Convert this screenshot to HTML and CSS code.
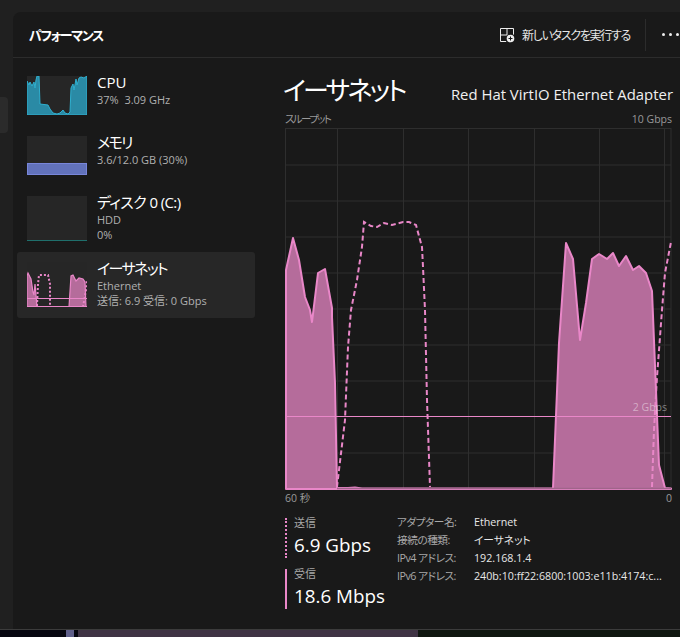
FILE: index.html
```html
<!DOCTYPE html>
<html lang="ja">
<head>
<meta charset="utf-8">
<title>パフォーマンス</title>
<link rel="stylesheet" href="styles.css">
</head>
<body>
<div class="app">
  <div class="window">
    <nav class="rail"><div class="rail-pill"></div></nav>
    <main class="panel">
      <header class="topbar">
        <h1 class="page-title">パフォーマンス</h1>
        <div class="actions">
          <svg class="task-icon" width="16" height="16" viewBox="0 0 16 16" aria-hidden="true">
            <path d="M1.5 1.5H14.5V9M7 14.5H1.5V1.5M1.5 8H14.5M8 1.5V14.5" fill="none" stroke="#eee" stroke-width="1"/>
            <circle cx="11.5" cy="11.5" r="5" fill="#191919"/>
            <circle cx="11.5" cy="11.5" r="3.8" fill="#eee"/>
            <path d="M11.5 9.5v4M9.5 11.5h4" stroke="#191919" stroke-width="1"/>
          </svg>
          <span class="task-label">新しいタスクを実行する</span>
          <span class="divider"></span>
          <span class="dots"><i></i><i></i><i></i></span>
        </div>
      </header>
      <div class="body">
        <aside class="sidebar">
          <div class="item item-cpu">
            <svg class="thumb thumb-short" viewBox="0 0 60 39" aria-hidden="true">
              <rect width="60" height="39" fill="#262626"/>
              <polygon points="0,39 0,5 2,9 3,6 5,10 7,6 8,12 9,4 10,0 12,0 13,28 21,29 23,33 26,37 30,38 33,37 36,34 38,37 41,38 43,36 44,12 46,8 47,14 49,3 50,9 52,2 54,1 57,2 60,0 60,39" fill="#2a8aa5" stroke="#2fb0d0" stroke-width="1"/>
            </svg>
            <div class="item-text">
              <div class="item-name">CPU</div>
              <div class="item-sub">37%&nbsp; 3.09 GHz</div>
            </div>
          </div>
          <div class="item item-mem">
            <svg class="thumb thumb-short" viewBox="0 0 60 39" aria-hidden="true">
              <rect width="60" height="39" fill="#262626"/>
              <rect x="0.5" y="27.5" width="59" height="11" fill="#6272bb" stroke="#7886da" stroke-width="1"/>
            </svg>
            <div class="item-text">
              <div class="item-name">メモリ</div>
              <div class="item-sub">3.6/12.0 GB (30%)</div>
            </div>
          </div>
          <div class="item item-disk">
            <svg class="thumb thumb-tall" viewBox="0 0 60 45" aria-hidden="true">
              <rect width="60" height="45" fill="#262626"/>
              <path d="M0 44.5H60" stroke="#1f6f6c" stroke-width="1"/>
            </svg>
            <div class="item-text">
              <div class="item-name">ディスク 0 (C:)</div>
              <div class="item-sub">HDD</div>
              <div class="item-sub">0%</div>
            </div>
          </div>
          <div class="item item-net">
            <svg class="thumb thumb-tall" viewBox="0 0 60 45" aria-hidden="true">
              <rect width="60" height="45" fill="#262626"/>
              <polygon points="0,45 0,14 1,11 4,17 6,30 7,33 8,22 10,45" fill="#b56c9b" stroke="#e987c8" stroke-width="1.2"/>
              <polygon points="42,45 44,14 46,13 49,19 52,16 56,17 58,20 59,45" fill="#b56c9b" stroke="#e987c8" stroke-width="1.2"/>
              <path d="M10 44L11 22L12 13L21 13L23 22L23 45M56 45L59 28L60 18" fill="none" stroke="#e987c8" stroke-width="2" stroke-dasharray="2 2"/>
              <path d="M0 36.5H60" stroke="#e987c8" stroke-width="1"/>
              <path d="M0 44.5H60" stroke="#e987c8" stroke-width="1"/>
            </svg>
            <div class="item-text">
              <div class="item-name">イーサネット</div>
              <div class="item-sub">Ethernet</div>
              <div class="item-sub">送信: 6.9 受信: 0 Gbps</div>
            </div>
          </div>
        </aside>
        <section class="content">
          <div class="heading-row">
            <h2 class="heading">イーサネット</h2>
            <span class="adapter">Red Hat VirtIO Ethernet Adapter</span>
          </div>
          <div class="axis-row axis-top"><span class="axis-title">スループット</span><span>10 Gbps</span></div>
          <svg class="chart" viewBox="285 128 387 362" aria-label="スループット グラフ">
            <g class="grid">
              <path d="M285 128.5H671M285 165H671M285 201H671M285 237H671M285 273H671M285 309H671M285 345H671M285 381H671M285 453H671"/>
              <path d="M285.5 128V489M337.5 128V489M403.5 128V489M468.5 128V489M534.5 128V489M599.5 128V489M664.5 128V489M671 128V489"/>
            </g>
            <polygon class="area" points="286,489 286,270 293,238 299,260 305,297 310,310 312,322 318,273 325,269 332,308 332,317 335,383 337,488 348,488 355,487.5 362,488.5 553,488.5 553,488 559,343 566,243 573,259 580,340 586,303 592,259 599,254 607,259 613,253 619,266 626,256 633,270 639,266 646,273 652,291 659,465 665,488 671,488.5 671,489"/>
            <path class="baseline" d="M337 488.5H671"/>
            <path class="dash" d="M337 487L339 470L345 420L348 347L351 310L357 280L362 247L364 222L371 226L377 227L384 223L392 225L403 222L409 222L416 225L422 247L423 267L425 310L427 400L430 487"/>
            <path class="dash" d="M652 487L654 430L657 377L662 310L665 273L671 242"/>
            <path class="limit" d="M285 416.5H671"/>
            <text class="limit-label" x="667" y="411" text-anchor="end">2 Gbps</text>
          </svg>
          <div class="axis-row axis-bottom"><span>60 秒</span><span>0</span></div>
          <div class="stats">
            <div class="rates">
              <div class="rate rate-send">
                <div class="rate-label">送信</div>
                <div class="rate-value">6.9 Gbps</div>
              </div>
              <div class="rate rate-recv">
                <div class="rate-label">受信</div>
                <div class="rate-value">18.6 Mbps</div>
              </div>
            </div>
            <dl class="details">
              <dt>アダプター名:</dt><dd>Ethernet</dd>
              <dt>接続の種類:</dt><dd>イーサネット</dd>
              <dt>IPv4 アドレス:</dt><dd>192.168.1.4</dd>
              <dt>IPv6 アドレス:</dt><dd>240b:10:ff22:6800:1003:e11b:4174:c...</dd>
            </dl>
          </div>
        </section>
      </div>
    </main>
  </div>
  <div class="desktop">
    <span class="d-black"></span><span class="d-blue"></span><span class="d-gap"></span><span class="d-mauve"></span><span class="d-green"></span>
  </div>
</div>
</body>
</html>
```
FILE: styles.css
```css
* { box-sizing: border-box; }
html, body { margin: 0; height: 100%; background: #202020; }
body {
  overflow: hidden;
  color: #fff;
  font-family: "Open Sans", "Noto Sans CJK JP", sans-serif;
  font-feature-settings: "palt";
}
.app { width: 680px; height: 637px; display: flex; flex-direction: column; }
.window { flex: none; height: 629px; display: flex; background: #202020; }
.rail { flex: none; width: 13px; padding-top: 97px; }
.rail-pill { width: 8px; height: 36px; background: #2b2b2b; border-radius: 0 4px 4px 0; }
.panel { flex: 1; margin-top: 12px; background: #191919; border-top-left-radius: 8px; display: flex; flex-direction: column; min-width: 0; }
.topbar { flex: none; height: 46px; border-bottom: 1px solid #2c2c2c; display: flex; align-items: center; justify-content: space-between; padding: 0 0 0 16px; }
.page-title { margin: 0; font-size: 13px; font-weight: 700; letter-spacing: -1.4px; }
.actions { display: flex; align-items: center; height: 32px; }
.task-icon { display: block; margin-right: 7px; }
.task-label { font-size: 12px; color: #e6e6e6; letter-spacing: -1.3px; }
.divider { width: 1px; height: 32px; background: #2c2c2c; margin: 0 16px 0 15px; }
.dots { display: flex; gap: 4px; width: 18px; }
.dots i { width: 3px; height: 3px; border-radius: 50%; background: #eee; flex: none; }
.body { flex: 1; display: flex; min-height: 0; }
.sidebar { flex: none; width: 272px; padding: 12px 0 0 4px; display: flex; flex-direction: column; }
.item { width: 238px; display: flex; padding: 6px 0 0 10px; }
.item-cpu, .item-mem { height: 60px; }
.item-disk { height: 62px; }
.item-net { height: 66px; padding-top: 10px; background: #272727; border-radius: 3px; }
.thumb { display: block; width: 60px; flex: none; }
.thumb-short { height: 39px; }
.thumb-tall { height: 45px; }
.item-text { margin-left: 10px; margin-top: -4px; }
.item-name { font-size: 15px; line-height: 20px; color: #fff; }
.item-mem .item-name, .item-net .item-name { letter-spacing: -1.6px; }
.item-disk .item-name { letter-spacing: -0.6px; }
.item-sub { font-size: 11px; line-height: 15px; color: #b0b0b0; }
.content { width: 387px; }
.heading-row { display: flex; justify-content: space-between; align-items: baseline; height: 54px; padding-top: 14px; margin-left: -2px; margin-right: -1px; }
.heading { margin: 0; font-size: 26px; line-height: 36px; font-weight: 400; letter-spacing: -2.7px; }
.adapter { font-size: 14.9px; color: #f0f0f0; }
.axis-row { display: flex; justify-content: space-between; font-size: 10.5px; color: #9a9a9a; line-height: 14px; }
.axis-top { height: 16px; margin-right: 0; }
.axis-title { letter-spacing: -1.6px; }
.chart { display: block; width: 387px; height: 362px; }
.grid path { fill: none; stroke: #2e2e2e; stroke-width: 1; }
.area { fill: #b56c9b; stroke: #e987c8; stroke-width: 2; stroke-linejoin: round; }
.baseline { fill: none; stroke: #a0648a; stroke-width: 1.5; }
.dash { fill: none; stroke: #e987c8; stroke-width: 2; stroke-dasharray: 5 3; }
.limit { fill: none; stroke: #e987c8; stroke-width: 1; }
.limit-label { font-size: 10.5px; fill: #ffffff; fill-opacity: 0.45; }
.axis-bottom { height: 18px; padding-top: 1px; }
.stats { display: flex; padding-top: 10px; }
.rates { width: 112px; display: flex; flex-direction: column; gap: 11px; }
.rate { height: 40px; padding-left: 7px; }
.rate-send { border-left: 2px dotted #e987c8; }
.rate-recv { border-left: 2px solid #e987c8; }
.rate-label { font-size: 11px; line-height: 12px; color: #a8a8a8; margin-top: -1px; }
.rate-value { font-size: 18.8px; line-height: 26px; margin-top: 3px; color: #fff; white-space: nowrap; }
.details { margin: -5px 0 0; display: grid; grid-template-columns: 77px auto; grid-auto-rows: 18px; font-size: 10.7px; line-height: 18px; }
.details dt { color: #a8a8a8; white-space: nowrap; letter-spacing: -0.5px; }
.details dd { margin: 0; color: #e8e8e8; white-space: nowrap; }
.desktop { flex: none; height: 8px; display: flex; border-top: 1px solid #3c3c3c; background: #05050f; }
.d-black { width: 66px; }
.d-blue { width: 8px; background: #5f5f8a; }
.d-gap { width: 4px; }
.d-mauve { width: 340px; background: #3f3344; }
.d-green { flex: 1; background: #0f1610; }
```
